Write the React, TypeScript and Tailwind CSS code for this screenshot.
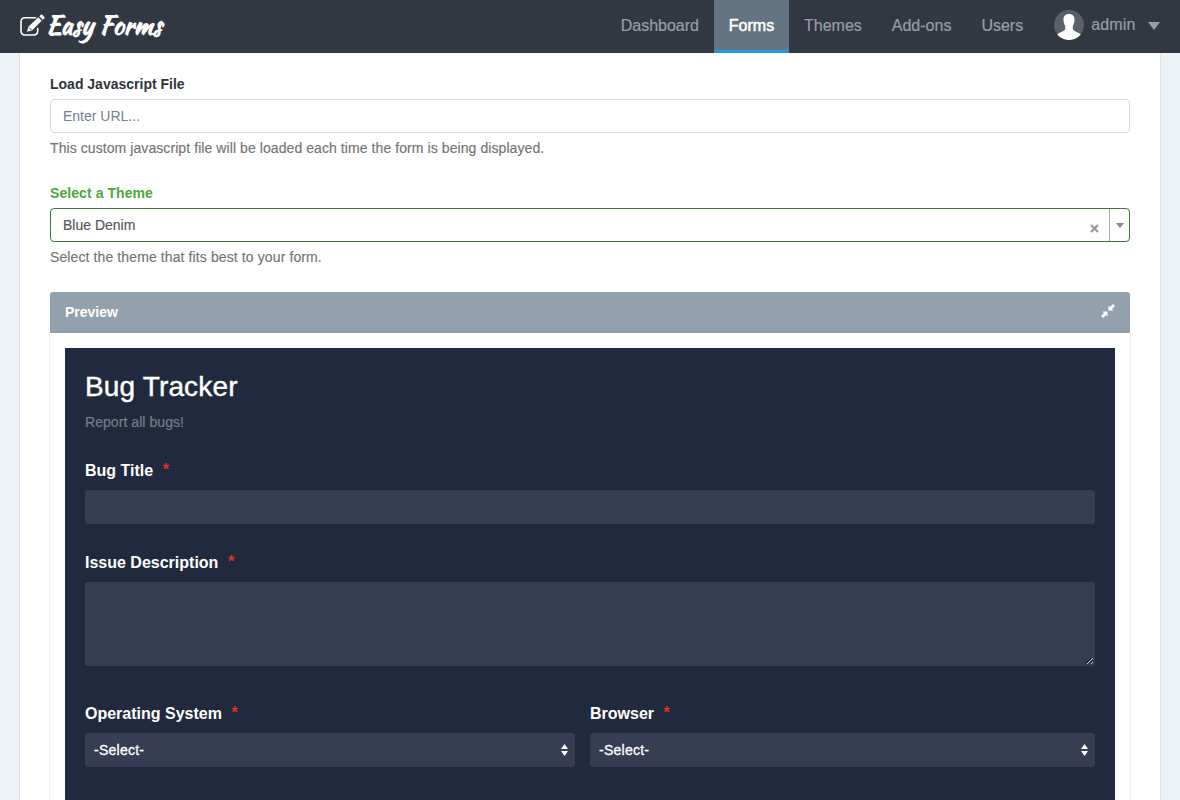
import React from "react";

const navItems = ["Dashboard", "Forms", "Themes", "Add-ons", "Users"];

function Logo() {
  return (
    <a className="flex h-full items-center text-white" href="#">
      <svg className="mt-[-4px] h-6 w-[26px]" viewBox="0 0 26 24" fill="none">
        <path
          d="M15.500 4.800H5.200Q1 4.800 1 9V17.800Q1 22 5.200 22H13.500Q17.700 22 17.700 17.800V15.500"
          stroke="white"
          strokeWidth="1.6"
          strokeLinecap="round"
        />
        <path d="M7 18.800L8.300 13.800L18.300 4.300L21.700 7.800L12 17.500Z" fill="white" />
        <path d="M19.300 3.300L20.900 1.800Q21.600 1.200 22.300 1.800L24.400 3.900Q25 4.600 24.400 5.300L22.700 6.800Z" fill="white" />
        <path d="M9 14.500L11.500 17" stroke="#313842" strokeWidth="1" />
      </svg>
      <span className="mt-[-3px] inline-block w-[118px] whitespace-nowrap font-['Kaushan_Script','Liberation_Sans',cursive] text-[25px] leading-[52px] font-bold">
        Easy Forms
      </span>
    </a>
  );
}

function Header() {
  return (
    <header className="flex h-[53px] justify-between bg-[#313842] pr-5 pl-5">
      <Logo />
      <nav className="flex text-base text-[#999ea7]">
        {navItems.map((item) =>
          item === "Forms" ? (
            <a key={item} href="#" className="w-[75px] border-b-[3px] border-[#1c9be0] bg-[#657483] text-center leading-[51px] text-white [-webkit-text-stroke:0.5px_white]">
              {item}
            </a>
          ) : (
            <a key={item} href="#" className="px-[15px] leading-[51px] [-webkit-text-stroke:0.2px_#999ea7]">
              {item}
            </a>
          ),
        )}
        <a href="#" className="flex items-center pl-[16px]">
          <svg className="mt-[-3px] h-[30px] w-[30px]" viewBox="0 0 30 30">
            <circle cx="15" cy="15" r="15" fill="#5a6069" />
            <path
              d="M15 4C11.500 4 9.500 6.200 9.500 9.500C9.500 12 10.200 14.500 11.200 16V19C11.200 21 6 22 3.300 24.400A15 15 0 0 0 26.700 24.400C24 22 18.800 21 18.800 19V16C19.800 14.500 20.500 12 20.500 9.500C20.500 6.200 18.500 4 15 4Z"
              fill="white"
            />
          </svg>
          <span className="mt-[-4px] ml-[7px] tracking-[0.15px] [-webkit-text-stroke:0.2px_#999ea7]">admin</span>
          <svg className="mt-[-1px] ml-[12.500px] h-2 w-3" viewBox="0 0 12 8">
            <path d="M0 0H12L6 8Z" fill="#999ea7" />
          </svg>
        </a>
      </nav>
    </header>
  );
}

function FieldLabel({ children }: { children: string }) {
  return (
    <label className="flex h-5 items-center pt-[2px] text-base leading-5 font-bold text-white">
      {children}
      <span className="mt-[-2px] ml-[9.500px] text-[#dd3322]">*</span>
    </label>
  );
}

function SelectBox() {
  return (
    <div className="mt-[10px] flex h-[34px] items-center justify-between rounded-[4px] bg-[#373d52] pr-[7px] pl-[9px] text-sm text-white">
      <span className="tracking-[0.25px] [-webkit-text-stroke:0.3px_white]">-Select-</span>
      <svg className="h-3 w-[7px]" viewBox="0 0 7 12">
        <path d="M0 5L3.500 0L7 5ZM0 7H7L3.500 12Z" fill="white" />
      </svg>
    </div>
  );
}

function BugForm() {
  return (
    <div className="h-[520px] bg-[#21293e] px-5 pt-5">
      <h3 className="text-[28px] leading-[38px] tracking-[0.15px] text-white [-webkit-text-stroke:0.4px_white]">Bug Tracker</h3>
      <p className="mt-[6px] text-sm leading-5 tracking-[0.06px] text-[#777d8b] [-webkit-text-stroke:0.2px_#777d8b]">Report all bugs!</p>
      <div className="mt-7">
        <FieldLabel>Bug Title</FieldLabel>
        <input className="mt-[10px] block h-[34px] w-full rounded-[3px] bg-[#373d52]" />
      </div>
      <div className="mt-7">
        <FieldLabel>Issue Description</FieldLabel>
        <div className="relative mt-[10px]">
          <textarea className="block h-[84px] w-full resize-none rounded-[3px] bg-[#373d52]" />
          <svg className="absolute right-[2px] bottom-[2px] h-[7px] w-[7px]" viewBox="0 0 7 7">
            <path d="M0 6L6 0M4 6L6 4" stroke="#10131d" strokeWidth="1" />
            <path d="M1 7L7 1M5 7L7 5" stroke="#d4d6dc" strokeWidth="1" />
          </svg>
        </div>
      </div>
      <div className="mt-[37px] flex gap-[15px]">
        <div className="w-[490px]">
          <FieldLabel>Operating System</FieldLabel>
          <SelectBox />
        </div>
        <div className="w-[505px]">
          <FieldLabel>Browser</FieldLabel>
          <SelectBox />
        </div>
      </div>
    </div>
  );
}

export default function App() {
  return (
    <div className="flex h-[800px] w-[1180px] flex-col overflow-hidden bg-[#edf2f6] font-['Liberation_Sans',Arial,sans-serif]">
      <Header />
      <main className="mx-[19px] flex-1 overflow-hidden border-x border-[#dde3e9] bg-white px-[30px] pt-[21px] text-sm">
        <label className="block leading-5 font-bold text-[#2f343b]">Load Javascript File</label>
        <input
          placeholder="Enter URL..."
          className="mt-[5px] block h-[34px] w-full rounded-[4px] border border-[#d5d8dd] bg-white px-3 text-sm placeholder:text-[#747e91]"
        />
        <p className="mt-[5px] leading-5 tracking-[0.078px] text-[#737373] [-webkit-text-stroke:0.15px_#737373]">
          This custom javascript file will be loaded each time the form is being displayed.
        </p>

        <label className="mt-[25px] block leading-5 font-bold tracking-[0.07px] text-[#4ba83c]">Select a Theme</label>
        <div className="mt-[5px] flex h-[34px] items-center rounded-[4px] border border-[#3c763d] pl-3 text-[#555]">
          <span className="flex-1 [-webkit-text-stroke:0.15px_#555]">Blue Denim</span>
          <svg className="mt-[6px] mr-[10px] h-[9px] w-[9px]" viewBox="0 0 9 9">
            <path d="M1 1L8 8M8 1L1 8" stroke="#999" strokeWidth="2.300" />
          </svg>
          <span className="flex h-full w-[20px] items-center justify-center border-l border-[#aaa]">
            <svg className="h-[5px] w-2" viewBox="0 0 8 5">
              <path d="M0 0H8L4 5Z" fill="#888" />
            </svg>
          </span>
        </div>
        <p className="mt-[5px] leading-5 tracking-[0.11px] text-[#737373] [-webkit-text-stroke:0.15px_#737373]">
          Select the theme that fits best to your form.
        </p>

        <section className="mx-[-1px] mt-[25px]">
          <div className="mx-px flex h-[41px] items-center justify-between rounded-t-[3px] bg-[#93a0ad] px-[15px] text-white">
            <span className="mt-[-2px] font-bold">Preview</span>
            <svg className="mt-[-3px] h-[14px] w-[14px]" viewBox="0 0 14 14" fill="white">
              <path d="M7.500 1.500L9 3L12 0L14 2L11 5L12.500 6.500H7.500Z" />
              <path d="M6.500 12.500L5 11L2 14L0 12L3 9L1.500 7.500H6.500Z" />
            </svg>
          </div>
          <div className="border-x border-[#eceef0] px-[15px] pt-[15px]">
            <BugForm />
          </div>
        </section>
      </main>
    </div>
  );
}
